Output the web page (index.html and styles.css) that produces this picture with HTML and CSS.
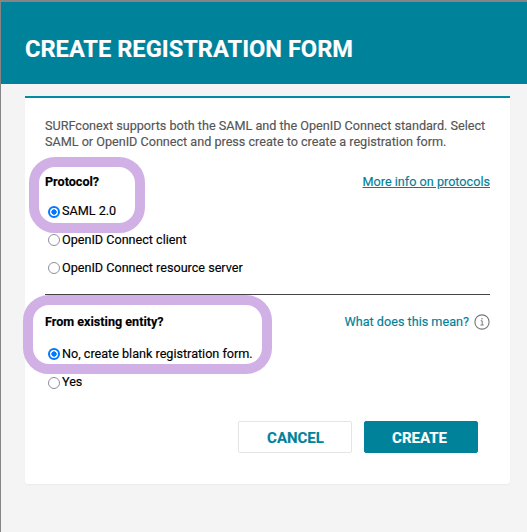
FILE: index.html
```html
<!DOCTYPE html>
<html lang="en">
<head>
<meta charset="utf-8">
<title>Create registration form</title>
<link rel="stylesheet" href="styles.css">
</head>
<body>
<main class="modal">
  <header class="header"><h1>CREATE REGISTRATION FORM</h1></header>
  <form class="card">
    <p class="intro">SURFconext supports both the SAML and the OpenID Connect standard. Select<br>SAML or OpenID Connect and press create to create a registration form.</p>
    <section class="group protocol">
      <div class="highlight highlight-protocol"></div>
      <div class="heading"><h2>Protocol?</h2><a class="link" href="#">More info on protocols</a></div>
      <label class="option"><input type="radio" name="protocol" checked><span>SAML 2.0</span></label>
      <label class="option"><input type="radio" name="protocol"><span>OpenID Connect client</span></label>
      <label class="option"><input type="radio" name="protocol"><span>OpenID Connect resource server</span></label>
    </section>
    <section class="group entity">
      <div class="highlight highlight-entity"></div>
      <div class="heading"><h2>From existing entity?</h2><span class="help">What does this mean?
        <svg class="info" viewBox="0 0 16 16" width="16" height="16" fill="none" stroke="#777"><circle cx="8" cy="8" r="7.1" stroke-width="1.1"/><path d="M6.7 6.8h1.5v4M6.5 11h3.2" stroke-width="1"/><circle cx="8" cy="4.8" r=".75" fill="#777" stroke="none"/></svg></span></div>
      <label class="option"><input type="radio" name="entity" checked><span>No, create blank registration form.</span></label>
      <label class="option"><input type="radio" name="entity"><span>Yes</span></label>
    </section>
    <div class="actions">
      <button type="button" class="button cancel">CANCEL</button>
      <button type="button" class="button create">CREATE</button>
    </div>
  </form>
</main>
</body>
</html>
```
FILE: styles.css
```css
* { box-sizing: border-box; }

body {
  margin: 0;
  height: 532px;
  overflow: hidden;
  background: #858585;
  padding: 2px 0 0 1px;
  font-family: Roboto, "Liberation Sans", sans-serif;
  font-size: 12.65px;
  color: #000;
  -webkit-text-stroke: 0.15px currentColor;
}

.modal {
  height: 530px;
  background: #f4f4f4;
}

.header {
  height: 82.4px;
  padding: 32px 0 0 24px;
  background: #00829b;
}

h1 {
  margin: 0;
  color: #fff;
  font-size: 23.65px;
  line-height: 30px;
  font-weight: 700;
  white-space: nowrap;
}

.card {
  width: 485px;
  height: 388px;
  margin: 11.6px 0 0 24px;
  padding: 20px 20px 0;
  background: #fff;
  border-top: 2px solid #008da3;
  border-radius: 0 0 3px 3px;
  box-shadow: 0 1px 1px #ececec;
}

.intro {
  height: 32px;
  margin: 0;
  line-height: 16px;
  color: #555;
  white-space: nowrap;
  letter-spacing: -0.015px;
}

.group { position: relative; }

.protocol {
  height: 145px;
  padding-top: 22px;
  border-bottom: 1px solid #444;
}

.entity {
  height: 126px;
  padding-top: 18px;
}

.heading {
  display: flex;
  justify-content: space-between;
  align-items: center;
  height: 20px;
}

.protocol .heading { margin-bottom: 4.5px; }
.entity .heading { height: 18px; margin-bottom: 8px; }

h2 {
  margin: 0;
  font-size: 12.6px;
  line-height: 18px;
  font-weight: 700;
}

.protocol h2 { padding-top: 1px; }

.link, .help { color: #008098; }

.help {
  display: flex;
  align-items: center;
  gap: 5px;
}

.option {
  display: flex;
  align-items: center;
  gap: 2px;
  height: 28.4px;
  padding-left: 3px;
  letter-spacing: -0.015px;
}

input {
  appearance: none;
  flex: none;
  width: 12px;
  height: 12px;
  margin: 2px 0 0;
  border: 1.5px solid #8f8f9d;
  border-radius: 50%;
  background: #fff;
}

input:checked {
  border: 2px solid #0079ff;
  background: radial-gradient(circle, #0079ff 2.4px, #fff 2.9px);
}

.highlight {
  position: absolute;
  border: 10px solid #d0b0e5;
  border-radius: 26px;
  pointer-events: none;
}

.highlight-protocol { left: -16px; top: 7px; width: 116px; height: 76px; }
.highlight-entity { left: -22px; top: 0; width: 249px; height: 79px; }

.actions {
  display: flex;
  justify-content: flex-end;
  gap: 12px;
  padding-right: 12px;
}

.button {
  width: 114px;
  height: 32px;
  padding: 3px 0 0;
  border: 1px solid #e4e4e4;
  border-radius: 2px;
  background: #fff;
  color: #00829b;
  font: 700 15px Roboto, sans-serif;
}

.cancel { padding-left: 1px; }

.create {
  padding-right: 3px;
  border-color: #00829b;
  background: #00829b;
  color: #fff;
}
```
